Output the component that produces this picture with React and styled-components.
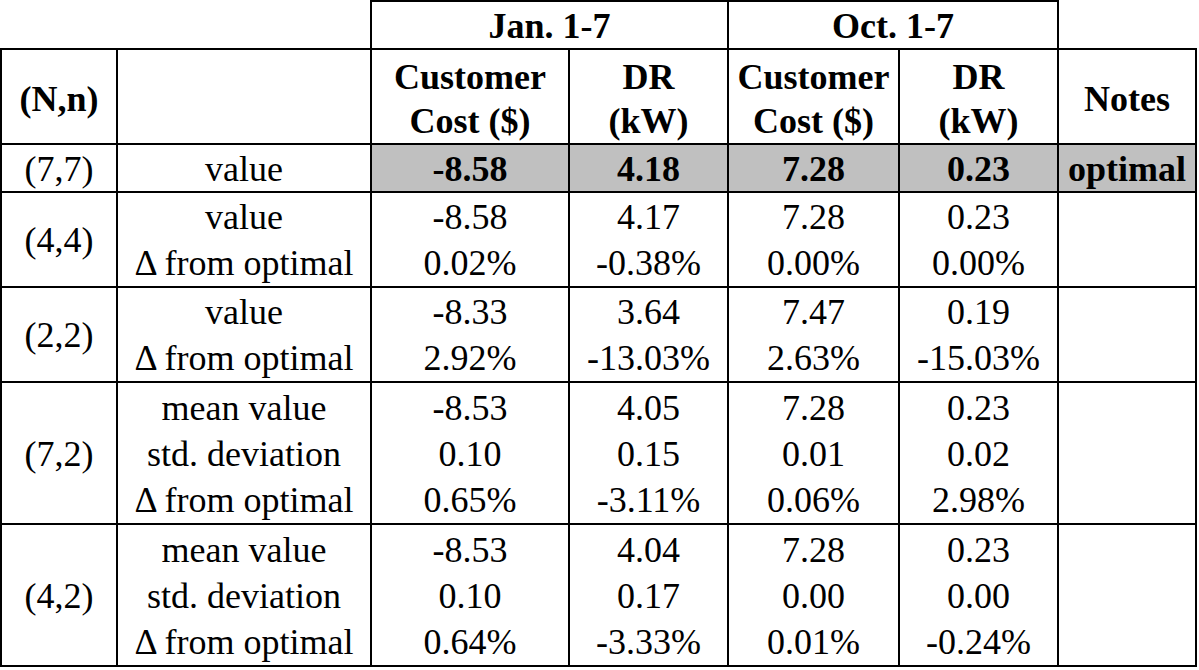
import React from "react";
import styled, { createGlobalStyle } from "styled-components";

const GlobalStyle = createGlobalStyle`
  html, body {
    margin: 0;
    padding: 0;
    background: #ffffff;
  }
  body {
    font-family: "Liberation Serif", "Times New Roman", serif;
    color: #000000;
  }
`;

const Table = styled.table`
  border-collapse: collapse;
  table-layout: fixed;
  width: 1197px;
  font-family: "Liberation Serif", "Times New Roman", serif;
  font-size: 36px;
`;

const Cell = styled.td`
  border: 2px solid #000;
  padding: ${(p) => p.$pad ?? 2}px 0 0;
  text-align: center;
  vertical-align: middle;
  line-height: ${(p) => p.$lh ?? 44}px;
  white-space: nowrap;
  font-weight: ${(p) => (p.$bold ? 700 : 400)};
  background: ${(p) => (p.$shade ? "#c0c0c0" : "transparent")};
`;

const HeadCell = styled.th`
  border: 2px solid #000;
  padding: ${(p) => p.$pad ?? 4}px 0 0;
  text-align: center;
  vertical-align: middle;
  line-height: ${(p) => p.$lh ?? 44}px;
  font-weight: 700;
  white-space: nowrap;
`;

const Blank = styled.th`
  border: none;
  padding: 0;
`;

const Row = styled.tr`
  height: ${(p) => p.$h}px;
`;

const widths = [116, 254, 198, 159, 171, 159, 138];

const groups = [
  {
    id: "(4,4)",
    labels: ["value", "Δ from optimal"],
    cols: [
      ["-8.58", "0.02%"],
      ["4.17", "-0.38%"],
      ["7.28", "0.00%"],
      ["0.23", "0.00%"],
    ],
  },
  {
    id: "(2,2)",
    labels: ["value", "Δ from optimal"],
    cols: [
      ["-8.33", "2.92%"],
      ["3.64", "-13.03%"],
      ["7.47", "2.63%"],
      ["0.19", "-15.03%"],
    ],
  },
  {
    id: "(7,2)",
    labels: ["mean value", "std. deviation", "Δ from optimal"],
    cols: [
      ["-8.53", "0.10", "0.65%"],
      ["4.05", "0.15", "-3.11%"],
      ["7.28", "0.01", "0.06%"],
      ["0.23", "0.02", "2.98%"],
    ],
  },
  {
    id: "(4,2)",
    labels: ["mean value", "std. deviation", "Δ from optimal"],
    cols: [
      ["-8.53", "0.10", "0.64%"],
      ["4.04", "0.17", "-3.33%"],
      ["7.28", "0.00", "0.01%"],
      ["0.23", "0.00", "-0.24%"],
    ],
  },
];

const Lines = ({ items }) =>
  items.map((t, i) => (
    <React.Fragment key={i}>
      {i > 0 && <br />}
      {t}
    </React.Fragment>
  ));

const App = () => {
  return (
    <>
      <GlobalStyle />
      <Table>
        <colgroup>
          {widths.map((w, i) => (
            <col key={i} style={{ width: w }} />
          ))}
        </colgroup>
        <thead>
          <Row $h={48}>
            <Blank colSpan={2} />
            <HeadCell colSpan={2} $pad={3} $lh={43}>
              Jan. 1-7
            </HeadCell>
            <HeadCell colSpan={2} $pad={3} $lh={43}>
              Oct. 1-7
            </HeadCell>
            <Blank />
          </Row>
          <Row $h={95}>
            <HeadCell>(N,n)</HeadCell>
            <HeadCell />
            <HeadCell>
              Customer
              <br />
              Cost ($)
            </HeadCell>
            <HeadCell>
              DR
              <br />
              (kW)
            </HeadCell>
            <HeadCell>
              Customer
              <br />
              Cost ($)
            </HeadCell>
            <HeadCell>
              DR
              <br />
              (kW)
            </HeadCell>
            <HeadCell>Notes</HeadCell>
          </Row>
        </thead>
        <tbody>
          <Row $h={48}>
            <Cell>(7,7)</Cell>
            <Cell>value</Cell>
            <Cell $bold $shade>-8.58</Cell>
            <Cell $bold $shade>4.18</Cell>
            <Cell $bold $shade>7.28</Cell>
            <Cell $bold $shade>0.23</Cell>
            <Cell $bold $shade>optimal</Cell>
          </Row>
          {groups.map((g) => {
            const two = g.labels.length === 2;
            const pad = two ? 1 : 2;
            return (
              <Row key={g.id} $h={two ? 95 : 142}>
                <Cell $pad={pad} $lh={46}>
                  {g.id}
                </Cell>
                <Cell $pad={pad} $lh={46}>
                  <Lines items={g.labels} />
                </Cell>
                {g.cols.map((c, i) => (
                  <Cell key={i} $pad={pad} $lh={46}>
                    <Lines items={c} />
                  </Cell>
                ))}
                <Cell $pad={pad} $lh={46} />
              </Row>
            );
          })}
        </tbody>
      </Table>
    </>
  );
};

export default App;
